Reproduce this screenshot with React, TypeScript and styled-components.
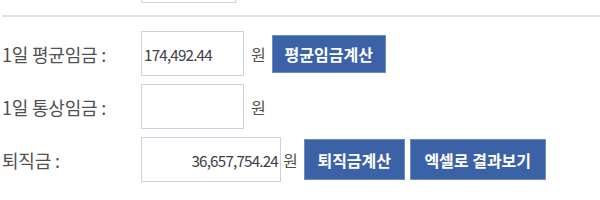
import React from "react";
import styled, { createGlobalStyle } from "styled-components";

const GlobalStyle = createGlobalStyle`
  body {
    margin: 0;
    background: #ffffff;
    font-family: "Noto Sans CJK KR", "Noto Sans", sans-serif;
  }
`;

const Page = styled.div`
  width: 600px;
  height: 200px;
  overflow: hidden;
`;

const PrevBox = styled.div`
  margin-left: 141px;
  width: 95px;
  height: 3px;
  box-sizing: border-box;
  border: 1px solid #cfd3e2;
  border-top: none;
`;

const Divider = styled.div`
  margin: 12px 0 14px 2px;
  height: 2px;
  background: #e1e1e1;
`;

const Row = styled.div`
  display: flex;
  align-items: center;
  height: 45px;
  margin-bottom: 8px;
`;

const Label = styled.div`
  width: 139px;
  padding-left: 2px;
  font-size: 18px;
  letter-spacing: -0.2px;
  color: #505050;
`;

const Field = styled.div<{ $w: number; $right?: boolean }>`
  box-sizing: border-box;
  width: ${(p) => p.$w}px;
  height: 45px;
  border: 1px solid #cdd2e3;
  display: flex;
  align-items: center;
  justify-content: ${(p) => (p.$right ? "flex-end" : "flex-start")};
  padding: 0 2px;
  font-family: "Noto Sans CJK KR", sans-serif;
  font-size: 15.2px;
  letter-spacing: -0.8px;
  color: #3c3c4a;
`;

const Unit = styled.span<{ $gap: number }>`
  margin-left: ${(p) => p.$gap}px;
  font-size: 16px;
  color: #505050;
`;

const Button = styled.button<{ $w: number; $h: number; $gap: number }>`
  margin-left: ${(p) => p.$gap}px;
  width: ${(p) => p.$w}px;
  height: ${(p) => p.$h}px;
  border: 1px solid #6d8cc2;
  background: #3b62a6;
  color: #ffffff;
  font-family: "Noto Sans CJK KR", sans-serif;
  font-weight: 700;
  font-size: 16px;
  padding: 0;
`;

export default function App() {
  return (
    <Page>
      <GlobalStyle />
      <PrevBox />
      <Divider />
      <Row>
        <Label>1일 평균임금 :</Label>
        <Field $w={103}>174,492.44</Field>
        <Unit $gap={7}>원</Unit>
        <Button $w={114} $h={38} $gap={6}>
          평균임금계산
        </Button>
      </Row>
      <Row>
        <Label>1일 통상임금 :</Label>
        <Field $w={103} />
        <Unit $gap={7}>원</Unit>
      </Row>
      <Row>
        <Label>퇴직금 :</Label>
        <Field $w={140} $right>
          36,657,754.24
        </Field>
        <Unit $gap={2}>원</Unit>
        <Button $w={101} $h={41} $gap={6}>
          퇴직금계산
        </Button>
        <Button $w={136} $h={41} $gap={5}>
          엑셀로 결과보기
        </Button>
      </Row>
    </Page>
  );
}
